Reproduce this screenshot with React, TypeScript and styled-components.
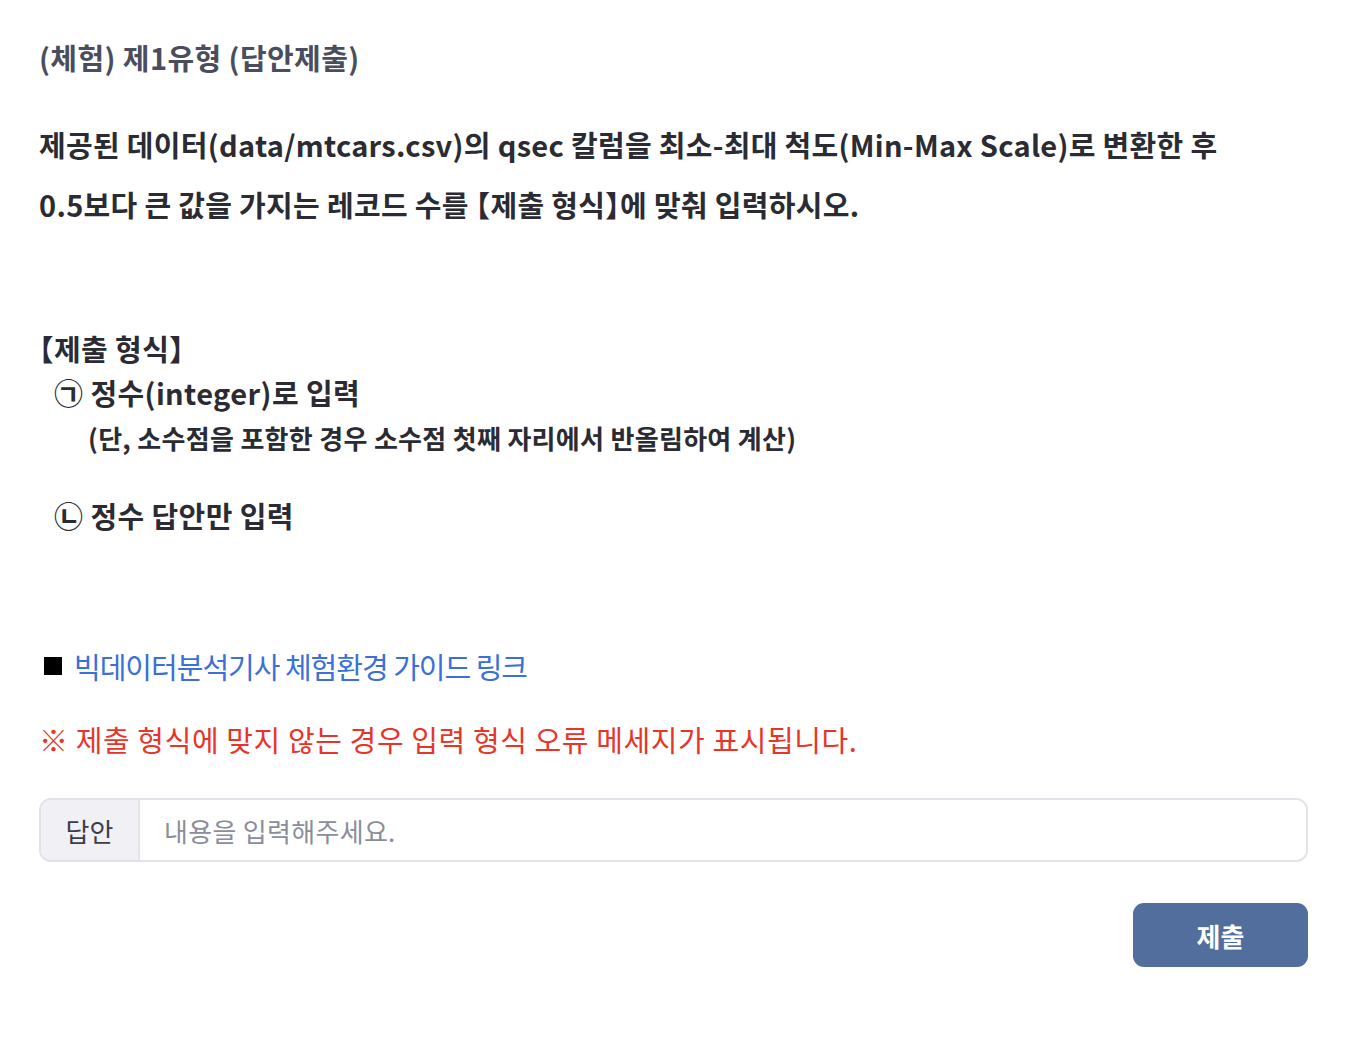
import React from 'react';
import styled, { createGlobalStyle } from 'styled-components';

const GlobalStyle = createGlobalStyle`
  html, body {
    margin: 0;
    padding: 0;
    background: #ffffff;
  }
  body {
    font-family: 'Noto Sans CJK KR', 'Noto Sans', sans-serif;
  }
`;

const Page = styled.div`
  padding: 34px 64px 60px 39px;
  display: flex;
  flex-direction: column;
`;

const Title = styled.h1`
  margin: 0;
  font-size: 29px;
  line-height: 46px;
  font-weight: 600;
  color: #4a4d5e;
  letter-spacing: 0.4px;
`;

const Question = styled.p`
  margin: 34px 0 0;
  font-size: 29px;
  line-height: 60px;
  font-weight: 700;
  color: #2b2b33;
  letter-spacing: 0.3px;
`;

const Bracket = styled.span`
  font-feature-settings: 'halt';
`;

const FormatBlock = styled.div`
  margin-top: 92px;
  display: flex;
  flex-direction: column;
`;

const FormatHeading = styled.div`
  font-size: 29px;
  line-height: 44px;
  font-weight: 700;
  color: #2b2b33;
  letter-spacing: 0.4px;
`;

const FormatItem = styled.div<{ $gap?: number }>`
  margin-top: ${(p) => p.$gap ?? 0}px;
  padding-left: 15px;
  font-size: 29px;
  line-height: 44px;
  font-weight: 700;
  color: #2b2b33;
  letter-spacing: 0.4px;
`;

const FormatNote = styled.div`
  padding-left: 49px;
  font-size: 26px;
  line-height: 48px;
  font-weight: 700;
  color: #2b2b33;
  letter-spacing: 0.3px;
`;

const GuideRow = styled.div`
  margin-top: 106px;
  display: flex;
  align-items: center;
  gap: 12px;
  padding-left: 5px;
`;

const Square = styled.span`
  width: 18px;
  height: 18px;
  background: #000000;
  flex-shrink: 0;
`;

const GuideLink = styled.a`
  font-size: 29px;
  line-height: 46px;
  color: #3a70d8;
  text-decoration: none;
  letter-spacing: -1px;
  cursor: pointer;
`;

const Warning = styled.p`
  margin: 27px 0 0;
  font-size: 29px;
  line-height: 46px;
  color: #e8352a;
  letter-spacing: 0.6px;
`;

const AnswerBox = styled.div`
  margin-top: 36px;
  display: flex;
  height: 64px;
  border: 2px solid #e2e2e8;
  border-radius: 12px;
  overflow: hidden;
  box-sizing: border-box;
`;

const AnswerLabel = styled.span`
  width: 97px;
  flex-shrink: 0;
  display: flex;
  align-items: center;
  justify-content: center;
  background: #f0f0f5;
  border-right: 2px solid #e2e2e8;
  font-size: 26px;
  color: #3a3d4a;
`;

const AnswerInput = styled.input`
  flex: 1;
  border: none;
  outline: none;
  padding: 0 24px;
  font-family: inherit;
  font-size: 26px;
  letter-spacing: 0.3px;
  color: #2b2b33;
  &::placeholder {
    color: #8a8d9a;
  }
`;

const Actions = styled.div`
  margin-top: 41px;
  display: flex;
  justify-content: flex-end;
`;

const SubmitButton = styled.button`
  width: 175px;
  height: 64px;
  border: none;
  border-radius: 11px;
  background: #526e9c;
  color: #ffffff;
  font-family: inherit;
  font-size: 26px;
  font-weight: 700;
  cursor: pointer;
`;

function App(): React.ReactElement {
  return (
    <>
      <GlobalStyle />
      <Page>
        <Title>(체험) 제1유형 (답안제출)</Title>
        <Question>
          제공된 데이터(data/mtcars.csv)의 qsec 칼럼을 최소-최대 척도(Min-Max Scale)로 변환한 후
          <br />
          0.5보다 큰 값을 가지는 레코드 수를 <Bracket>【</Bracket>제출 형식<Bracket>】</Bracket>에 맞춰
          입력하시오.
        </Question>

        <FormatBlock>
          <FormatHeading>
            <Bracket>【</Bracket>제출 형식<Bracket>】</Bracket>
          </FormatHeading>
          <FormatItem>㉠ 정수(integer)로 입력</FormatItem>
          <FormatNote>(단, 소수점을 포함한 경우 소수점 첫째 자리에서 반올림하여 계산)</FormatNote>
          <FormatItem $gap={31}>㉡ 정수 답안만 입력</FormatItem>
        </FormatBlock>

        <GuideRow>
          <Square />
          <GuideLink>빅데이터분석기사 체험환경 가이드 링크</GuideLink>
        </GuideRow>

        <Warning>※ 제출 형식에 맞지 않는 경우 입력 형식 오류 메세지가 표시됩니다.</Warning>

        <AnswerBox>
          <AnswerLabel>답안</AnswerLabel>
          <AnswerInput placeholder="내용을 입력해주세요." />
        </AnswerBox>

        <Actions>
          <SubmitButton>제출</SubmitButton>
        </Actions>
      </Page>
    </>
  );
}

export default App;
